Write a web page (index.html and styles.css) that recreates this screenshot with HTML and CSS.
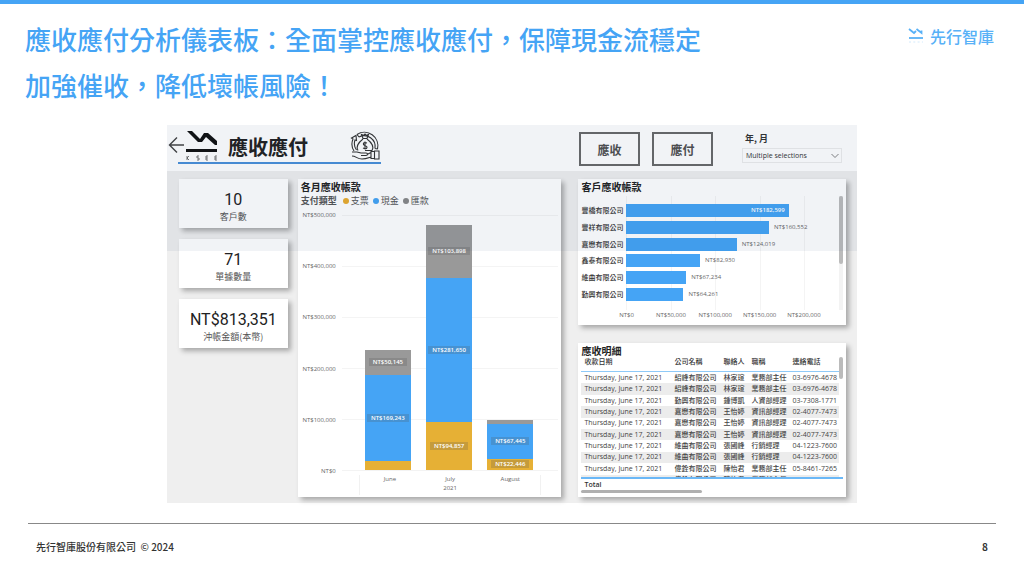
FILE: index.html
```html
<!DOCTYPE html>
<html lang="zh-Hant">
<head>
<meta charset="utf-8">
<title>應收應付分析儀表板</title>
<link rel="stylesheet" href="styles.css">
</head>
<body>
<header class="slide-head">
  <h1 class="slide-title">應收應付分析儀表板：全面掌控應收應付，保障現金流穩定<br>加強催收，降低壞帳風險！</h1>
  <div class="company">
    <svg class="company-mark" viewBox="0 0 16 16" aria-hidden="true">
      <path d="M1 1l5 4 2-2M8.500 1l5 4V2.500" fill="none" stroke="#58b1f7" stroke-width="1.800"/>
      <path d="M1 10h14" stroke="#58b1f7" stroke-width="1.800"/>
      <path d="M1 14h14" stroke="#d3eafc" stroke-width="1" stroke-dasharray="2 2.300"/>
    </svg>
    <span>先行智庫</span>
  </div>
</header>

<main class="dashboard">
  <div class="dash-head">
    <div class="brand">
      <button class="back" aria-label="返回">
        <svg viewBox="0 0 16 18"><path d="M9 1.500L1.500 9 9 16.500M1.500 9H16" fill="none" stroke="#444" stroke-width="1.400"/></svg>
      </button>
      <svg class="brand-mark" viewBox="0 0 32 32" aria-hidden="true">
        <path d="M1 1h5l8 8 4-6h4l9 8v4h-2l-9-8-4 5h-4z" fill="#111"/>
        <path d="M0 19h31v3H0z" fill="#111"/>
        <path d="M1 26v4M3 26l-2 2 2 2M13 26h-2v2h2v2h-2M22 26h-2v4h2M20 28h2M31 26h-2v4h2M29 28h2" fill="none" stroke="#555" stroke-width=".8"/>
      </svg>
      <h2 class="brand-title">應收應付</h2>
      <svg class="money" viewBox="0 0 30 30" fill="none" stroke="#333" stroke-width="1.100" aria-hidden="true">
        <path d="M7 4.500A13.500 13.500 0 0 1 27.500 19M9 7A11 11 0 0 1 25 18.500M7 4.500L9 7M25 18.500l2.500.5"/>
        <path d="M4 21A13 13 0 0 1 3 9L1.500 8l4.500-2.500.500 5-1.500-.500A11 11 0 0 0 6.500 20"/>
        <path d="M11.500 4.500l2 .800 1.500-1.300 1.500 1.300 2-.800-1.500 4h-4zM12.500 8.500h5M13 9c-6.500 5-6.500 9-5 11.500M17 9c6.500 5 6.500 9 5 11.500H15"/>
        <path d="M17 13c-3-1-4 0-3.500 1.500s4 1 3.500 3-2.500 1.200-4 .500M15 11.500v8"/>
        <path d="M2 22h5l4 1h5c2 0 2 2.500 0 2.500h-5M17 24.500l4-2M2 26c4 0 5 3 10 3 4 0 6-1 9-2M21 21.500h3.500v7H21zM24.500 21H29v8h-4.500z"/>
      </svg>
    </div>
    <div class="controls">
      <button class="tab">應收</button>
      <button class="tab">應付</button>
      <div class="filter">
        <label for="month">年, 月</label>
        <div class="select-box">
          <select id="month"><option>Multiple selections</option></select>
          <svg viewBox="0 0 8 6" aria-hidden="true"><path d="M.5 1L4 4.500 7.500 1" fill="none" stroke="#666" stroke-width=".8"/></svg>
        </div>
      </div>
    </div>
  </div>

  <div class="panels">
    <div class="kpis">
      <section class="card kpi"><strong>10</strong><span>客戶數</span></section>
      <section class="card kpi"><strong>71</strong><span>單據數量</span></section>
      <section class="card kpi"><strong>NT$813,351</strong><span>沖帳金額(本幣)</span></section>
    </div>

    <section class="card monthly">
      <h3 class="card-title">各月應收帳款</h3>
      <ul class="legend">
        <li class="legend-name">支付類型</li>
        <li class="key key-check">支票</li>
        <li class="key key-cash">現金</li>
        <li class="key key-wire">匯款</li>
      </ul>
      <div class="plot">
        <div class="y-axis"><span>NT$500,000</span><span>NT$400,000</span><span>NT$300,000</span><span>NT$200,000</span><span>NT$100,000</span><span>NT$0</span></div>
        <div class="canvas">
          <div class="stack">
            <div class="seg wire" style="height:10%"><span>NT$50,145</span></div>
            <div class="seg cash" style="height:33.8%"><span>NT$169,243</span></div>
            <div class="seg check" style="height:3.4%"></div>
          </div>
          <div class="stack">
            <div class="seg wire" style="height:20.8%"><span>NT$103,898</span></div>
            <div class="seg cash" style="height:56.3%"><span>NT$281,650</span></div>
            <div class="seg check" style="height:19%"><span>NT$94,857</span></div>
          </div>
          <div class="stack">
            <div class="seg wire" style="height:1.5%"></div>
            <div class="seg cash" style="height:13.5%"><span>NT$67,445</span></div>
            <div class="seg check" style="height:4.5%"><span>NT$22,446</span></div>
          </div>
        </div>
        <div class="x-axis"><span>June</span><span>July<br>2021</span><span>August</span></div>
      </div>
    </section>

    <div class="side">
      <section class="card customers">
        <h3 class="card-title">客戶應收帳款</h3>
        <div class="ranking">
          <div class="names"><span>豐橋有限公司</span><span>豐祥有限公司</span><span>嘉懋有限公司</span><span>鑫泰有限公司</span><span>維曲有限公司</span><span>勤興有限公司</span></div>
          <div class="bars">
            <div class="row"><div class="bar" style="width:77.4%">NT$182,599</div></div>
            <div class="row"><div class="bar" style="width:68%"></div><span>NT$160,552</span></div>
            <div class="row"><div class="bar" style="width:52.6%"></div><span>NT$124,019</span></div>
            <div class="row"><div class="bar" style="width:35.1%"></div><span>NT$82,930</span></div>
            <div class="row"><div class="bar" style="width:28.5%"></div><span>NT$67,234</span></div>
            <div class="row"><div class="bar" style="width:27.2%"></div><span>NT$64,261</span></div>
          </div>
          <div class="scroll-v"><i></i></div>
        </div>
        <div class="scale"><span>NT$0</span><span>NT$50,000</span><span>NT$100,000</span><span>NT$150,000</span><span>NT$200,000</span></div>
      </section>

      <section class="card details">
        <h3 class="card-title">應收明細</h3>
        <div class="table-view">
          <table>
            <thead><tr><th class="c-date">收款日期</th><th class="c-firm">公司名稱</th><th class="c-name">聯絡人</th><th class="c-job">職稱</th><th>連絡電話</th></tr></thead>
            <tbody>
              <tr><td>Thursday, June 17, 2021</td><td>紹峰有限公司</td><td>林家瑄</td><td>業務部主任</td><td>03-6976-4678</td></tr>
              <tr><td>Thursday, June 17, 2021</td><td>紹峰有限公司</td><td>林家瑄</td><td>業務部主任</td><td>03-6976-4678</td></tr>
              <tr><td>Thursday, June 17, 2021</td><td>勤興有限公司</td><td>鍾博凱</td><td>人資部經理</td><td>03-7308-1771</td></tr>
              <tr><td>Thursday, June 17, 2021</td><td>嘉懋有限公司</td><td>王怡婷</td><td>資訊部經理</td><td>02-4077-7473</td></tr>
              <tr><td>Thursday, June 17, 2021</td><td>嘉懋有限公司</td><td>王怡婷</td><td>資訊部經理</td><td>02-4077-7473</td></tr>
              <tr><td>Thursday, June 17, 2021</td><td>嘉懋有限公司</td><td>王怡婷</td><td>資訊部經理</td><td>02-4077-7473</td></tr>
              <tr><td>Thursday, June 17, 2021</td><td>維曲有限公司</td><td>張國峰</td><td>行銷經理</td><td>04-1223-7600</td></tr>
              <tr><td>Thursday, June 17, 2021</td><td>維曲有限公司</td><td>張國峰</td><td>行銷經理</td><td>04-1223-7600</td></tr>
              <tr><td>Thursday, June 17, 2021</td><td>偉銓有限公司</td><td>陳怡君</td><td>業務部主任</td><td>05-8461-7265</td></tr>
              <tr><td>Thursday, June 17, 2021</td><td>偉銓有限公司</td><td>陳怡君</td><td>業務部主任</td><td>05-8461-7265</td></tr>
            </tbody>
          </table>
          <div class="scroll-v"><i></i></div>
        </div>
        <div class="total">Total</div>
        <div class="scroll-h"></div>
      </section>
    </div>
  </div>
</main>

<footer class="slide-foot"><span>先行智庫股份有限公司&nbsp; © 2024</span><b>8</b></footer>
</body>
</html>
```

FILE: styles.css
```css
* { box-sizing: border-box; }

body {
  margin: 0;
  border-top: 4px solid #45a4f5;
  background: #fff;
  color: #333;
  font-family: "Noto Sans CJK TC", sans-serif;
}

h1, h2, h3, ul { margin: 0; padding: 0; }
button, select { font-family: inherit; color: inherit; }
svg { display: block; }

/* Slide heading */
.slide-head {
  display: flex;
  justify-content: space-between;
  align-items: flex-start;
  padding: 12px 30px 0 25px;
}
.slide-title {
  color: #45a4f5;
  font-size: 26px;
  font-weight: 500;
  line-height: 46px;
}
.company {
  display: flex;
  align-items: center;
  gap: 6px;
  padding-top: 8px;
  color: #58b1f7;
  font-size: 16px;
  font-weight: 500;
  line-height: 24px;
  white-space: nowrap;
}
.company-mark { width: 16px; height: 16px; }

/* Dashboard frame */
.dashboard {
  position: relative;
  margin: 17px 16.3% 0;
  background: #efefef;
}
.dashboard::after {
  content: "";
  position: absolute;
  inset: 0 0 auto;
  height: 126px;
  background: rgba(25, 50, 95, .06);
  pointer-events: none;
}
.dash-head {
  display: grid;
  grid-template-columns: 412fr 278fr;
  height: 46px;
  background: #fff;
}
.brand {
  position: relative;
  display: flex;
  align-items: center;
  justify-self: start;
  height: 39px;
  padding: 0 1px;
}
.brand::after {
  content: "";
  position: absolute;
  inset: auto 0 0 11px;
  height: 2px;
  background: #4a90d9;
}
.back {
  width: 16px;
  padding: 0;
  border: 0;
  background: none;
}
.brand-mark { width: 32px; height: 32px; margin: 2px 0 0 2px; }
.brand-title {
  margin: 5px 0 0 10px;
  color: #222;
  font-size: 20px;
  line-height: 30px;
}
.money { width: 30px; height: 30px; margin-left: 42px; }

.controls { display: flex; align-items: flex-start; padding-top: 7px; }
.tab {
  width: 61px;
  height: 34px;
  margin-right: 12px;
  padding: 0;
  border: 2px solid #6a6a6a;
  background: none;
  color: #505050;
  font-size: 12px;
  font-weight: 700;
}
.filter {
  width: 100px;
  margin-left: 17px;
  font-size: 9px;
  font-weight: 700;
  line-height: 14px;
}
.filter label { display: block; padding-left: 3px; }
.select-box { position: relative; margin-top: 2px; }
.select-box select {
  display: block;
  width: 100%;
  height: 15px;
  padding: 0 3px;
  border: 1px solid #ececec;
  border-radius: 0;
  background: none;
  appearance: none;
  font: 7px/12px "Open Sans", sans-serif;
}
.select-box svg { position: absolute; top: 5px; right: 3px; width: 8px; height: 6px; }

/* Cards */
.panels {
  display: grid;
  grid-template-columns: 109fr 264fr 275fr;
  gap: 10px;
  padding: 8px 11px 6px 12px;
}
.card {
  background: #fff;
  box-shadow: 3px 3px 5px rgba(0, 0, 0, .3);
}
.card-title {
  color: #222;
  font-size: 10px;
  line-height: 15px;
}
.kpis { display: flex; flex-direction: column; gap: 11px; }
.kpi {
  display: flex;
  flex-direction: column;
  align-items: center;
  height: 49px;
  padding-top: 11px;
}
.kpi strong { font: 400 16px/20px Roboto, sans-serif; color: #222; }
.kpi span { font-size: 9px; line-height: 14px; color: #555; }

/* Monthly stacked chart */
.monthly { display: flex; flex-direction: column; padding: 0 3px; }
.legend {
  display: flex;
  gap: 4px;
  list-style: none;
  font-size: 9px;
  line-height: 14px;
  color: #555;
}
.legend-name { margin-right: 2px; font-weight: 700; }
.key { display: flex; align-items: center; gap: 2px; }
.key::before { content: ""; width: 6px; height: 6px; border-radius: 50%; }
.key-check::before { background: #e9ac2e; }
.key-cash::before { background: #45a4f5; }
.key-wire::before { background: #888; }
.plot {
  display: grid;
  grid-template-columns: 35px 1fr;
  grid-template-rows: 264px auto;
  column-gap: 6px;
  margin-top: 3px;
  font: 6px/8px "Open Sans", sans-serif;
  color: #666;
}
.y-axis {
  display: flex;
  flex-direction: column;
  justify-content: space-between;
  text-align: right;
}
.canvas {
  display: flex;
  gap: 15px;
  margin: 4px 0;
  padding: 0 25px 0 23px;
  border-bottom: 1px solid #f3f3f3;
  background: repeating-linear-gradient(#f4f4f4 0 1px, transparent 1px 20%);
}
.stack { display: flex; flex: 1; flex-direction: column; justify-content: flex-end; }
.seg { display: flex; align-items: center; justify-content: center; color: #fff; }
.seg span { padding: 0 4px; background: rgba(80, 80, 80, .22); font-weight: 600; }
.wire { background: #999; }
.cash { background: #45a4f5; }
.check { background: #e6b035; }
.x-axis {
  grid-column: 2;
  display: flex;
  height: 20px;
  margin: 0 17px;
  border: solid #f1f1f1;
  border-width: 0 1px;
  text-align: center;
  line-height: 9px;
}
.x-axis span { flex: 1; }

/* Customer ranking */
.side { display: flex; flex-direction: column; gap: 18px; padding-left: 7px; }
.customers { height: 146px; padding: 0 3px; }
.ranking { display: flex; height: 116px; padding-top: 2px; }
.names, .bars {
  display: flex;
  flex-direction: column;
  justify-content: space-between;
  padding: 8px 0 9px;
}
.names { flex: none; width: 45px; font-size: 7px; line-height: 13px; font-weight: 500; }
.bars {
  flex: 1;
  margin-right: 3px;
  background: repeating-linear-gradient(90deg, #f4f4f4 0 1px, transparent 1px 21.2%);
}
.row, .scale, .bar { font: 6px/13px "Open Sans", sans-serif; }
.row { display: flex; gap: 5px; color: #666; }
.bar {
  height: 13px;
  padding-right: 4px;
  background: #45a4f5;
  color: #fff;
  font-weight: 600;
  text-align: right;
}
.scroll-v { flex: none; width: 4px; background: #f3f3f3; }
.scroll-v i { display: block; height: 68px; border-radius: 2px; background: #bbb; }
.scale {
  display: grid;
  grid-template-columns: repeat(5, 1fr);
  margin: -1px 17px 0 23px;
  color: #666;
  text-align: center;
}

/* Detail table */
.details { height: 154px; padding: 0 3px; }
.table-view {
  display: flex;
  height: 123px;
  margin-top: -2px;
  overflow: hidden;
  border-bottom: 2px solid #6bb8f7;
}
table {
  flex: 1;
  height: 130px;
  border-collapse: collapse;
  table-layout: fixed;
  font-size: 7px;
  line-height: 10px;
  white-space: nowrap;
}
th, td { padding: 0 0 0 3px; text-align: left; color: #333; font-weight: 500; }
td { font-family: "Open Sans", "Noto Sans CJK TC", sans-serif; color: #444; }
th { height: 15px; padding-bottom: 5px; border-bottom: 1px solid #8fcaf8; }
.c-date { width: 90px; }
.c-firm { width: 49px; }
.c-name { width: 28px; }
.c-job { width: 41px; }
tbody tr:nth-child(even) { background: #ececec; }
.table-view .scroll-v { background: none; }
.table-view i { height: 22px; margin-top: 1px; }
.total { padding-left: 3px; font: 600 7px/11px "Open Sans", sans-serif; }
.scroll-h { width: 46%; height: 3px; border-radius: 2px; background: #b0b0b0; }

/* Slide footer */
.slide-foot {
  display: flex;
  justify-content: space-between;
  margin: 20px 28px 0;
  padding: 15px 8px 0;
  border-top: 1px solid #888;
  font-size: 10px;
  font-weight: 500;
  line-height: 15px;
}
```
